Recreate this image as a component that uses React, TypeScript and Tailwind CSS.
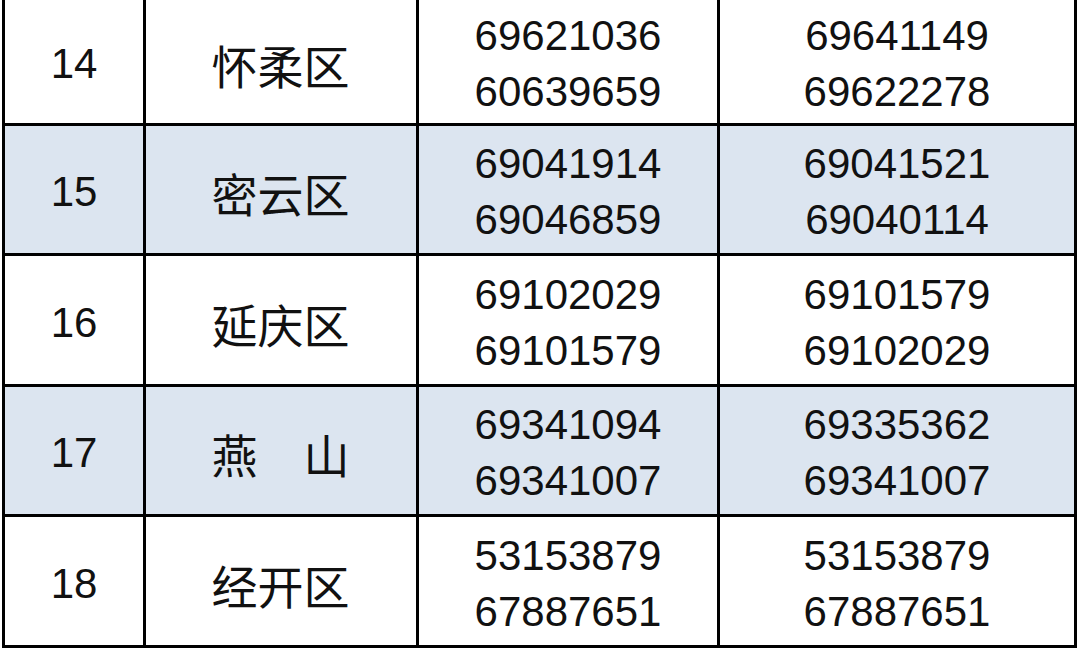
type Row = {
  no: string
  district: string
  phones: [string, string]
  others: [string, string]
  shaded: boolean
  h: string
}

const rows: Row[] = [
  { no: '14', district: '怀柔区', phones: ['69621036', '60639659'], others: ['69641149', '69622278'], shaded: false, h: 'h-[126px]' },
  { no: '15', district: '密云区', phones: ['69041914', '69046859'], others: ['69041521', '69040114'], shaded: true, h: 'h-[130px]' },
  { no: '16', district: '延庆区', phones: ['69102029', '69101579'], others: ['69101579', '69102029'], shaded: false, h: 'h-[131px]' },
  { no: '17', district: '燕\u3000山', phones: ['69341094', '69341007'], others: ['69335362', '69341007'], shaded: true, h: 'h-[130px]' },
  { no: '18', district: '经开区', phones: ['53153879', '67887651'], others: ['53153879', '67887651'], shaded: false, h: 'h-[131px]' },
]

const num = "font-['Liberation_Sans',Arial,sans-serif] text-[42px]"
const cjk = "font-['Noto_Sans_CJK_SC',sans-serif] text-[46px]"

function Cell({ w, children }: { w: string; children: React.ReactNode }) {
  return (
    <div className={`${w} shrink-0 h-full pt-[5px] border-r-[3px] border-black flex flex-col items-center justify-center`}>
      {children}
    </div>
  )
}

export default function App() {
  return (
    <div className="w-[1080px] h-[652px] bg-white text-[#111] overflow-hidden">
      <div className="ml-[2px] w-[1075px] border-l-[3px] border-black">
        {rows.map((r) => (
          <div
            key={r.no}
            className={`${r.h} flex border-b-[3px] border-black ${r.shaded ? 'bg-[#dce5f0]' : 'bg-white'}`}
          >
            <Cell w="w-[141px]">
              <span className={`${num} leading-none`}>{r.no}</span>
            </Cell>
            <Cell w="w-[273px]">
              <span className={`${cjk} leading-none pr-[1px]`}>{r.district}</span>
            </Cell>
            <Cell w="w-[301px]">
              {r.phones.map((p, i) => (
                <span key={i} className={`${num} leading-[56px]`}>{p}</span>
              ))}
            </Cell>
            <Cell w="w-[357px]">
              {r.others.map((p, i) => (
                <span key={i} className={`${num} leading-[56px]`}>{p}</span>
              ))}
            </Cell>
          </div>
        ))}
      </div>
    </div>
  )
}
